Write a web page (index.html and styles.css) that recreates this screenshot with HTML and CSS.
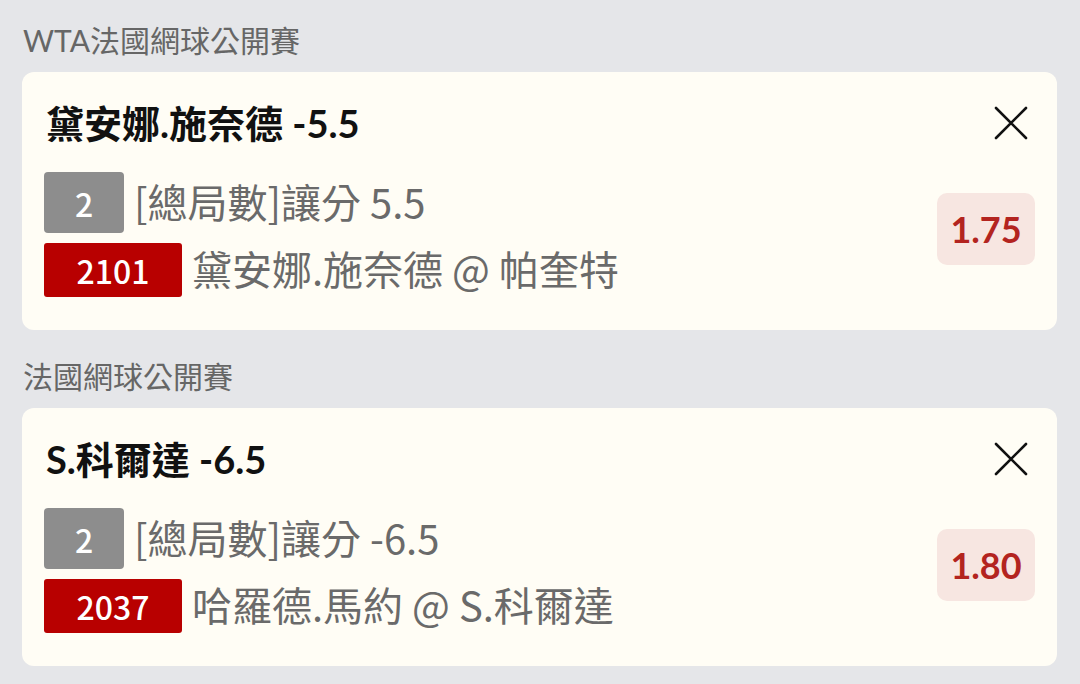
FILE: index.html
```html
<!DOCTYPE html>
<html lang="zh-Hant">
<head>
<meta charset="utf-8">
<title>投注單</title>
<link rel="stylesheet" href="styles.css">
</head>
<body>
<main class="slip">
  <section class="group">
    <div class="group-title">WTA法國網球公開賽</div>
    <div class="card">
      <div class="card-head">
        <div class="title">黛安娜.施奈德 -5.5</div>
        <button class="close" aria-label="關閉">
          <svg viewBox="0 0 34 34" width="34" height="34"><path d="M2 2L32 32M32 2L2 32" stroke="#111" stroke-width="2.6" stroke-linecap="round" fill="none"/></svg>
        </button>
      </div>
      <div class="card-body">
        <div class="rows">
          <div class="row"><span class="badge badge-gray">2</span><span class="text">[總局數]讓分 5.5</span></div>
          <div class="row"><span class="badge badge-red">2101</span><span class="text">黛安娜.施奈德 @ 帕奎特</span></div>
        </div>
        <div class="odds">1.75</div>
      </div>
    </div>
  </section>
  <section class="group">
    <div class="group-title">法國網球公開賽</div>
    <div class="card">
      <div class="card-head">
        <div class="title">S.科爾達 -6.5</div>
        <button class="close" aria-label="關閉">
          <svg viewBox="0 0 34 34" width="34" height="34"><path d="M2 2L32 32M32 2L2 32" stroke="#111" stroke-width="2.6" stroke-linecap="round" fill="none"/></svg>
        </button>
      </div>
      <div class="card-body">
        <div class="rows">
          <div class="row"><span class="badge badge-gray">2</span><span class="text">[總局數]讓分 -6.5</span></div>
          <div class="row"><span class="badge badge-red">2037</span><span class="text">哈羅德.馬約 @ S.科爾達</span></div>
        </div>
        <div class="odds">1.80</div>
      </div>
    </div>
  </section>
</main>
</body>
</html>
```

FILE: styles.css
```css
* { box-sizing: border-box; }
html, body { margin: 0; padding: 0; }
body {
  background: #e5e6e9;
  font-family: Lato, "Noto Sans CJK TC", sans-serif;
  width: 1080px;
  height: 684px;
  overflow: hidden;
}
.slip {
  padding: 0 23px 0 22px;
}
.group { margin-bottom: 6px; }
.group-title {
  padding: 22px 0 14px 1px;
  line-height: 36px;
  font-size: 30px;
  color: #666666;
}
.card {
  background: #fffdf5;
  border-radius: 12px;
  padding: 28px 22px 33px 22px;
}
.card-head {
  display: flex;
  align-items: center;
  justify-content: space-between;
  height: 46px;
}
.title {
  font-size: 38px;
  font-weight: 700;
  color: #111111;
  padding-left: 2px;
  line-height: 46px;
}
.close {
  border: 0;
  background: transparent;
  padding: 0;
  margin-right: 7px;
  width: 34px;
  height: 34px;
  display: flex;
}
.card-body {
  margin-top: 26px;
  display: flex;
  align-items: center;
  justify-content: space-between;
}
.rows {
  display: flex;
  flex-direction: column;
  gap: 10px;
}
.row {
  display: flex;
  align-items: center;
}
.badge {
  display: flex;
  align-items: center;
  justify-content: center;
  color: #ffffff;
  font-family: "Noto Sans CJK TC", sans-serif;
  font-weight: 500;
  font-size: 32px;
  flex-shrink: 0;
}
.badge-gray {
  width: 80px;
  height: 61px;
  background: #8d8d8d;
  border-radius: 4px;
}
.badge-red {
  width: 138px;
  height: 54px;
  background: #b80000;
  border-radius: 3px;
}
.text {
  font-family: "Noto Sans CJK TC", sans-serif;
  font-size: 40px;
  line-height: 50px;
  color: #6a6a6a;
  margin-left: 10px;
  margin-top: -4px;
  white-space: nowrap;
}
.odds {
  width: 98px;
  height: 72px;
  border-radius: 10px;
  background: #f7e6e1;
  color: #b3241f;
  font-size: 36px;
  font-weight: 700;
  display: flex;
  align-items: center;
  justify-content: center;
  margin-bottom: 12px;
}
```
